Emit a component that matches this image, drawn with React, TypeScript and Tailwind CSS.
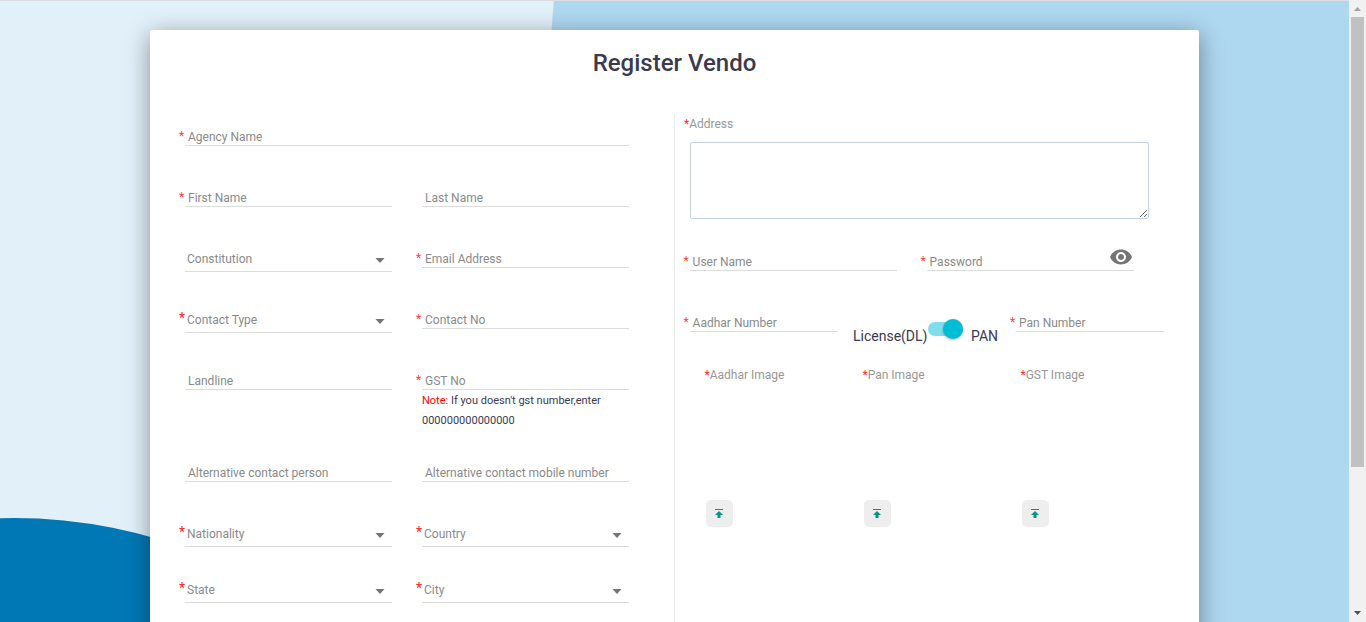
import React from "react";

type FieldProps = {
  label: string;
  required?: boolean;
  className?: string;
  children?: React.ReactNode;
};

function Field({ label, required, className = "", children }: FieldProps) {
  return (
    <div className={`flex items-start ${className}`}>
      <span className="w-[6px] shrink-0 text-[12px] leading-[19px] text-[#ff3b3b]">{required ? "*" : ""}</span>
      <div className="min-w-0 flex-1">
        <div className="flex h-[19px] justify-between border-b border-[#dcdcdc] pl-[3px] text-[12px] leading-[20px] whitespace-nowrap text-[#8a8a8a]">
          {label}
        </div>
        {children}
      </div>
    </div>
  );
}

function SelectField({ label, required }: FieldProps) {
  return (
    <div className="flex items-start">
      <span className="w-[6px] shrink-0 text-[14px] leading-[17px] text-[#ff2020]">{required ? "*" : ""}</span>
      <div className="flex h-[23px] flex-1 items-start justify-between border-b border-[#dcdcdc] pr-[7px] pl-[2px] text-[12px] leading-[20px] text-[#8a8a8a]">
        {label}
        <svg className="mt-[9px]" width="10" height="5" viewBox="0 0 10 5">
          <path d="M0.5 0h9L5 5z" fill="#757575" />
        </svg>
      </div>
    </div>
  );
}

function Upload({ label }: { label: string }) {
  return (
    <div className="flex w-[158px] flex-col items-start">
      <div className="pl-[0.5px] text-[12px] leading-[20px] text-[#979797]">
        <span className="text-[#ff2a2a]">*</span>
        {label}
      </div>
      <button className="mt-[115px] ml-[2px] flex h-[27px] w-[27px] items-center justify-center rounded-[5px] bg-[#eeeeee] pr-px">
        <svg width="10" height="10" viewBox="0 0 10 10" fill="#009688">
          <path d="M1 0h8v1H1zM5 2L9 6H6.500V9H3.500V6H1z" />
        </svg>
      </button>
    </div>
  );
}

function Row({ className, children }: { className: string; children: React.ReactNode }) {
  return <div className={`grid grid-cols-[213px_213px] gap-x-6 ${className}`}>{children}</div>;
}

export default function App() {
  return (
    <div className="relative flex h-[622px] w-[1366px] overflow-hidden bg-[#e1f0f9] font-['Roboto',sans-serif] text-[#3a3a4f]">
      <svg className="absolute inset-0" width="1349" height="622" viewBox="0 0 1349 622">
        <path d="M554 0Q552.500 15 551.500 32V622H1349V0z" fill="#aed7f0" />
        <circle cx="14" cy="1023" r="505" fill="#0078b6" />
        <path d="M0 0h1349v1H0z" fill="#dcdde0" />
      </svg>

      <main className="relative w-[1349px] pt-[30px] pl-[150px]">
        <div className="h-[700px] w-[1049px] rounded-[2px] bg-white shadow-[0_5px_25px_rgba(0,0,0,0.4)]">
          <h1 className="pt-[16px] text-center text-[24px] leading-[34px] font-medium">Register Vendo</h1>
          <div className="mt-[34px] flex">
            <section className="w-[524px] shrink-0 pt-[13px] pl-[29px]">
              <Field label="Agency Name" required className="h-[61px] w-[450px]" />
              <Row className="h-[61px]">
                <Field label="First Name" required />
                <Field label="Last Name" />
              </Row>
              <Row className="h-[61px]">
                <SelectField label="Constitution" />
                <Field label="Email Address" required />
              </Row>
              <Row className="h-[61px]">
                <SelectField label="Contact Type" required />
                <Field label="Contact No" required />
              </Row>
              <Row className="h-[92px]">
                <Field label="Landline" />
                <Field label="GST No" required>
                  <p className="pt-px text-[11px] leading-[20px] whitespace-nowrap">
                    <span className="text-[#ff0000]">Note:</span> If you doesn't gst number,enter
                    <br />
                    000000000000000
                  </p>
                </Field>
              </Row>
              <Row className="h-[61px]">
                <Field label="Alternative contact person" />
                <Field label="Alternative contact mobile number" />
              </Row>
              <Row className="h-[56px]">
                <SelectField label="Nationality" required />
                <SelectField label="Country" required />
              </Row>
              <Row className="h-[56px]">
                <SelectField label="State" required />
                <SelectField label="City" required />
              </Row>
            </section>

            <section className="h-[600px] flex-1 border-l border-[#ebebeb] pl-[9px]">
              <div className="text-[12px] leading-[20px] text-[#979797]">
                <span className="text-[#ff2a2a]">*</span>
                Address
              </div>
              <textarea className="mt-[8px] ml-[6px] block h-[77px] w-[459px] resize rounded-[2px] border border-[#c5d3df] bg-white" />
              <div className="mt-[33px] -ml-[0.4px] grid h-[61px] grid-cols-[213px_213px] gap-x-6">
                <Field label="User Name" required />
                <div className="flex">
                  <Field label="Password" required className="flex-1" />
                  <svg className="-mt-[7px] mr-px -ml-[25px] shrink-0" width="24" height="24" viewBox="0 0 24 24" fill="#757575">
                    <path d="M12 4.500C7 4.500 2.730 7.610 1 12c1.730 4.390 6 7.500 11 7.500s9.270-3.110 11-7.500c-1.730-4.390-6-7.500-11-7.500zM12 17c-2.760 0-5-2.240-5-5s2.240-5 5-5 5 2.240 5 5-2.240 5-5 5zm0-8c-1.660 0-3 1.340-3 3s1.340 3 3 3 3-1.340 3-3-1.340-3-3-3z" />
                  </svg>
                </div>
              </div>
              <div className="-ml-[0.4px] flex h-[52px] items-start">
                <Field label="Aadhar Number" required className="w-[154px]" />
                <div className="ml-[15px] flex w-[157.4px] items-start text-[14px] leading-[20px]">
                  <span className="w-[75px] pt-[13px] pl-[0.4px] whitespace-nowrap">License(DL)</span>
                  <span className="mt-[9px] flex h-[14px] w-[35.4px] items-center justify-end rounded-full bg-[#80deea]">
                    <span className="h-5 w-5 shrink-0 rounded-full bg-[#00bcd4] shadow-[0_1px_3px_rgba(0,0,0,0.3)]" />
                  </span>
                  <span className="pt-[13px] pl-[8px]">PAN</span>
                </div>
                <Field label="Pan Number" required className="w-[154px]" />
              </div>
              <div className="flex pl-[20px]">
                <Upload label="Aadhar Image" />
                <Upload label="Pan Image" />
                <Upload label="GST Image" />
              </div>
            </section>
          </div>
        </div>
      </main>

      <aside className="relative flex h-[622px] w-[17px] flex-col items-center justify-between bg-[#f1f1f1]">
        <svg width="17" height="17" viewBox="0 0 17 17">
          <path d="M5 11h7L8.500 7z" fill="#a3a3a3" />
        </svg>
        <div className="h-[450px] w-[13px] bg-[#c1c1c1]" />
        <div className="flex-1" />
        <svg width="17" height="17" viewBox="0 0 17 17">
          <path d="M5 6h7L8.500 10z" fill="#505050" />
        </svg>
      </aside>
    </div>
  );
}
